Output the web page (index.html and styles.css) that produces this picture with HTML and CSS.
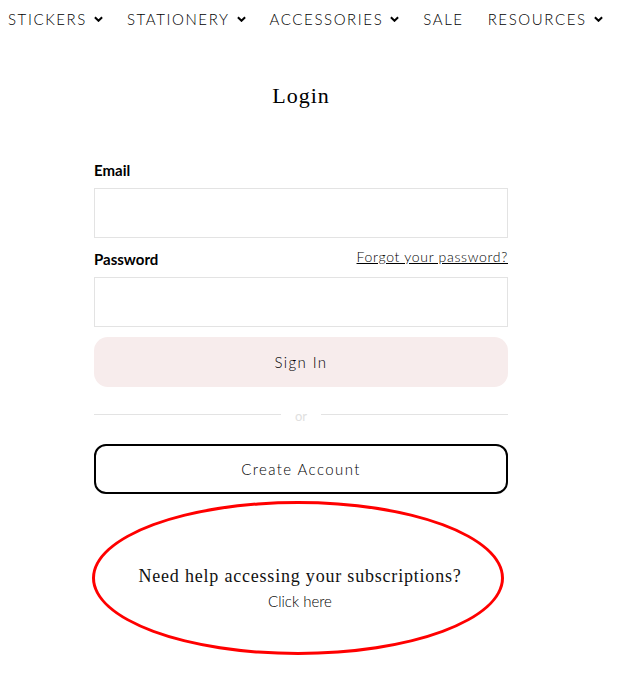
FILE: index.html
```html
<!DOCTYPE html>
<html>
<head>
<meta charset="utf-8">
<link rel="stylesheet" href="styles.css">
</head>
<body>
<nav class="nav">
  <a class="nav-item">STICKERS <svg class="chev" viewBox="0 0 10 6"><path d="M1 1l4 4 4-4"/></svg></a>
  <a class="nav-item">STATIONERY <svg class="chev" viewBox="0 0 10 6"><path d="M1 1l4 4 4-4"/></svg></a>
  <a class="nav-item">ACCESSORIES <svg class="chev" viewBox="0 0 10 6"><path d="M1 1l4 4 4-4"/></svg></a>
  <a class="nav-item">SALE</a>
  <a class="nav-item">RESOURCES <svg class="chev" viewBox="0 0 10 6"><path d="M1 1l4 4 4-4"/></svg></a>
</nav>
<main class="main">
  <h1 class="title">Login</h1>
  <form class="form">
    <label class="label">Email</label>
    <input class="input" type="email">
    <div class="row">
      <label class="label">Password</label>
      <a class="forgot">Forgot your password?</a>
    </div>
    <input class="input" type="password">
    <button class="btn btn-signin" type="button">Sign In</button>
    <div class="divider"><span class="line"></span><span class="or">or</span><span class="line"></span></div>
    <button class="btn btn-create" type="button">Create Account</button>
  </form>
  <section class="help">
    <p class="help-title">Need help accessing your subscriptions?</p>
    <a class="help-link">Click here</a>
  </section>
</main>
</body>
</html>
```
FILE: styles.css
```css
* { box-sizing: border-box; }
body {
  margin: 0;
  font-family: "Lato", "Open Sans", sans-serif;
  color: #000;
  background: #fff;
}
.nav {
  display: flex;
  padding: 8px 0 0 8px;
  height: 30px;
  font-size: 15px;
  font-weight: 300;
  letter-spacing: 1.6px;
  color: #000;
}
.nav-item {
  display: flex;
  align-items: center;
  gap: 7px;
  margin-right: 24px;
}
.chev {
  width: 9px;
  height: 6px;
  fill: none;
  stroke: #000;
  stroke-width: 2.2;
}
.main {
  width: 414px;
  margin-left: 94px;
  display: flex;
  flex-direction: column;
}
.title {
  font-family: "Liberation Serif", "DejaVu Serif", serif;
  font-weight: normal;
  font-size: 22px;
  letter-spacing: 1px;
  text-align: center;
  margin: 53px 0 0 0;
  line-height: 26px;
}
.form {
  margin-top: 52px;
  display: flex;
  flex-direction: column;
}
.label {
  font-weight: 700;
  font-size: 15px;
  line-height: 18px;
  color: #000;
  margin-bottom: 9px;
}
.row {
  display: flex;
  justify-content: space-between;
  align-items: flex-end;
  margin-top: 10px;
}
.forgot {
  font-size: 14px;
  font-weight: 300;
  text-decoration: underline;
  color: #000;
  margin-bottom: 12px;
  letter-spacing: 0.7px;
}
.input {
  height: 50px;
  border: 1px solid #e3e3e3;
  background: #fff;
  margin: 0;
}
.btn {
  height: 50px;
  font-family: "Lato", "Open Sans", sans-serif;
  font-size: 15px;
  font-weight: 300;
  letter-spacing: 1.4px;
  color: #000;
  cursor: pointer;
}
.btn-signin {
  margin-top: 10px;
  background: #f7ecec;
  border: none;
  border-radius: 14px;
}
.divider {
  display: flex;
  align-items: center;
  margin-top: 20px;
  height: 14px;
}
.line {
  flex: 1;
  height: 1px;
  background: #e3e3e3;
}
.or {
  width: 40px;
  text-align: center;
  font-size: 13px;
  color: #e0e0e0;
  line-height: 14px;
  padding-top: 4px;
}
.btn-create {
  margin-top: 23px;
  background: #fff;
  border: 2px solid #000;
  border-radius: 12px;
}
.help {
  width: 412px;
  height: 154px;
  margin-top: 7px;
  margin-left: -2px;
  border: 3px solid #f00;
  border-radius: 50%;
  display: flex;
  flex-direction: column;
  align-items: center;
  justify-content: center;
  padding-top: 20px;
  padding-left: 4px;
}
.help-title {
  font-family: "Liberation Serif", "DejaVu Serif", serif;
  font-size: 18px;
  letter-spacing: 0.8px;
  margin: 0;
  color: #111;
}
.help-link {
  font-size: 15px;
  font-weight: 300;
  margin-top: 5px;
  color: #000;
}
```
